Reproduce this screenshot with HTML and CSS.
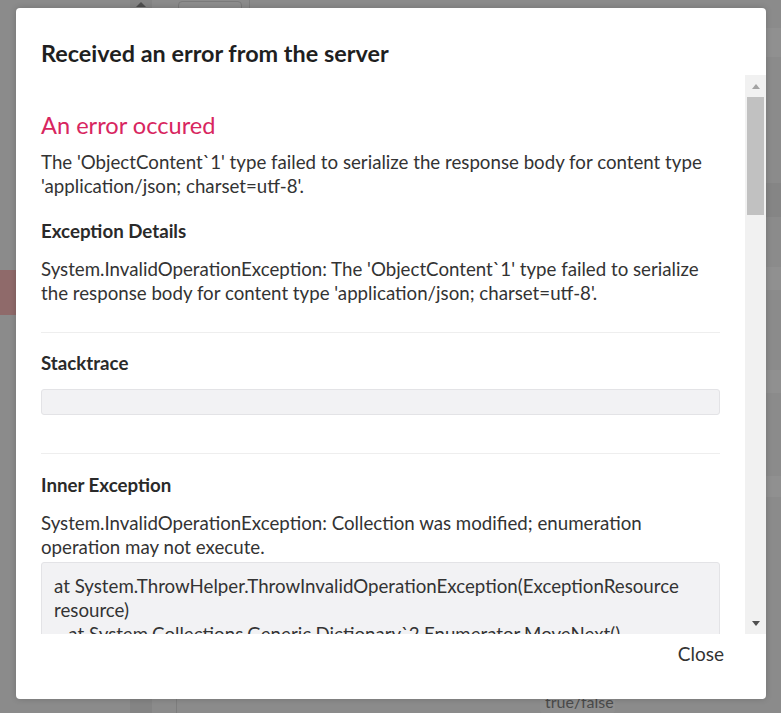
FILE: index.html
```html
<!DOCTYPE html>
<html lang="en">
<head>
<meta charset="utf-8">
<title>Received an error from the server</title>
<link rel="stylesheet" href="styles.css">
</head>
<body>
<div class="backdrop">
  <div class="bg-scroll-top"><span class="bg-arrow"></span></div>
  <div class="bg-input"></div>
  <div class="bg-vline"></div>
  <div class="bg-vline2"></div>
  <div class="bg-red"></div>
  <div class="bg-cell"><span>true/false</span></div>
  <div class="bg-band b1"></div>
  <div class="bg-band b2"></div>
  <div class="bg-band b3"></div>
  <div class="bg-band b4"></div>
  <div class="bg-band b5"></div>
</div>
<div class="page">
  <div class="modal">
    <div class="modal-header">
      <h2 class="modal-title">Received an error from the server</h2>
    </div>
    <div class="modal-body">
      <div class="content">
        <h3 class="error-title">An error occured</h3>
        <p class="text p-first">The 'ObjectContent`1' type failed to serialize the response body for content type 'application/json; charset=utf-8'.</p>
        <h4 class="section-title st-details">Exception Details</h4>
        <p class="text p-detail">System.InvalidOperationException: The 'ObjectContent`1' type failed to serialize the response body for content type 'application/json; charset=utf-8'.</p>
        <hr class="divider d1">
        <h4 class="section-title st-stack">Stacktrace</h4>
        <div class="trace trace-empty"></div>
        <hr class="divider d2">
        <h4 class="section-title st-inner">Inner Exception</h4>
        <p class="text p-inner">System.InvalidOperationException: Collection was modified; enumeration operation may not execute.</p>
        <pre class="trace trace-full">at System.ThrowHelper.ThrowInvalidOperationException(ExceptionResource resource)
   at System.Collections.Generic.Dictionary`2.Enumerator.MoveNext()</pre>
      </div>
      <div class="scrollbar">
        <div class="sb-btn sb-up"><span class="tri-up"></span></div>
        <div class="sb-track">
          <div class="sb-thumb"></div>
        </div>
        <div class="sb-btn sb-down"><span class="tri-down"></span></div>
      </div>
    </div>
    <div class="modal-footer">
      <button class="btn-close" type="button">Close</button>
    </div>
  </div>
</div>
</body>
</html>
```

FILE: styles.css
```css
* { box-sizing: border-box; }

html, body {
  margin: 0;
  padding: 0;
  height: 100%;
}

body {
  background: #8b8b8b;
  font-family: Lato, "Open Sans", "Liberation Sans", sans-serif;
  color: #333;
  overflow: hidden;
  position: relative;
}

/* dimmed page behind the dialog */
.backdrop {
  position: absolute;
  inset: 0;
  z-index: 0;
}
.bg-scroll-top {
  position: absolute;
  left: 130px; top: 0;
  width: 22px; height: 713px;
  background: #848484;
  display: flex;
  justify-content: center;
}
.bg-arrow {
  margin-top: 2px;
  width: 0; height: 0;
  border-left: 5px solid transparent;
  border-right: 5px solid transparent;
  border-bottom: 5px solid #4e4e4e;
}
.bg-input {
  position: absolute;
  left: 178px; top: 1px;
  width: 64px; height: 20px;
  border: 1px solid #7a7a7a;
  border-radius: 4px;
  background: #8d8d8d;
}
.bg-vline {
  position: absolute;
  left: 249px; top: 0;
  width: 1px; height: 10px;
  background: #7d7d7d;
}
.bg-vline2 {
  position: absolute;
  left: 176px; top: 690px;
  width: 1px; height: 23px;
  background: #7d7d7d;
}
.bg-red {
  position: absolute;
  left: 0; top: 270px;
  width: 16px; height: 45px;
  background: #8f6a6a;
}
.bg-cell {
  position: absolute;
  left: 540px; top: 690px;
  width: 75px; height: 23px;
  background: #8e8e8e;
  border-radius: 3px;
  font-size: 16px;
  color: #4a4a4a;
  padding-left: 5px;
  line-height: 20px;
  padding-top: 2px;
}
.bg-band {
  position: absolute;
  left: 766px;
  width: 15px;
  background: #838383;
}
.b1 { top: 28px; height: 29px; background: #909090; }
.b2 { top: 183px; height: 34px; background: #858585; }
.b3 { top: 267px; height: 23px; background: #909090; }
.b4 { top: 370px; height: 23px; background: #909090; }
.b5 { top: 476px; height: 21px; background: #909090; }

/* layout */
.page {
  position: relative;
  z-index: 1;
  padding: 8px 15px 0 16px;
}

.modal {
  width: 750px;
  height: 691px;
  background: #fff;
  border-radius: 4px;
  box-shadow: 0 0 6px rgba(0, 0, 0, 0.18);
  display: flex;
  flex-direction: column;
  overflow: hidden;
}

.modal-header {
  height: 67px;
  padding: 31px 25px 0 25px;
  flex: none;
}
.modal-title {
  margin: 0;
  font-size: 23.4px;
  line-height: 28px;
  font-weight: 700;
  color: #1f1f1f;
}

.modal-body {
  height: 559px;
  flex: none;
  display: flex;
}

.content {
  flex: 1;
  overflow: hidden;
  padding: 36px 25px 0 25px;
}

.error-title {
  margin: 0;
  font-size: 23.6px;
  line-height: 28px;
  font-weight: 400;
  color: #d8265f;
}

.text {
  margin: 0;
  font-size: 18.7px;
  line-height: 24px;
  color: #333;
}
.p-first { margin-top: 11px; }

.section-title {
  margin: 0;
  font-size: 18.7px;
  line-height: 24px;
  font-weight: 700;
  color: #2a2a2a;
}
.st-details { margin-top: 21px; }
.p-detail { margin-top: 14px; }

.divider {
  border: 0;
  height: 1px;
  background: #eeeeee;
  margin: 0;
}
.d1 { margin-top: 27px; }
.st-stack { margin-top: 18px; }

.trace {
  background: #f2f2f4;
  border: 1px solid #e3e3e6;
  border-radius: 3px;
}
.trace-empty {
  margin-top: 14px;
  height: 26px;
}
.d2 { margin-top: 38px; }
.st-inner { margin-top: 19px; }
.p-inner { margin-top: 14px; }

.trace-full {
  margin: 3px 0 0 0;
  padding: 11px 12px 10px 12px;
  font-family: Lato, "Open Sans", "Liberation Sans", sans-serif;
  font-size: 18.7px;
  line-height: 24px;
  color: #333;
  white-space: pre-wrap;
  word-break: normal;
}

/* fake scrollbar */
.scrollbar {
  width: 21px;
  flex: none;
  background: #f1f1f1;
  display: flex;
  flex-direction: column;
}
.sb-btn {
  height: 22px;
  display: flex;
  justify-content: center;
  align-items: center;
}
.tri-up {
  width: 0; height: 0;
  border-left: 4.5px solid transparent;
  border-right: 4.5px solid transparent;
  border-bottom: 5px solid #a3a3a3;
}
.tri-down {
  width: 0; height: 0;
  border-left: 4.5px solid transparent;
  border-right: 4.5px solid transparent;
  border-top: 5px solid #505050;
}
.sb-track {
  flex: 1;
  padding: 0 2px;
}
.sb-thumb {
  height: 118px;
  background: #c1c1c1;
}

.modal-footer {
  flex: 1;
  display: flex;
  justify-content: flex-end;
  align-items: flex-start;
  padding: 8px 42px 0 0;
}
.btn-close {
  background: none;
  border: 0;
  padding: 0;
  font-family: Lato, "Open Sans", "Liberation Sans", sans-serif;
  font-size: 19px;
  line-height: 24px;
  color: #333;
  cursor: pointer;
}
```
